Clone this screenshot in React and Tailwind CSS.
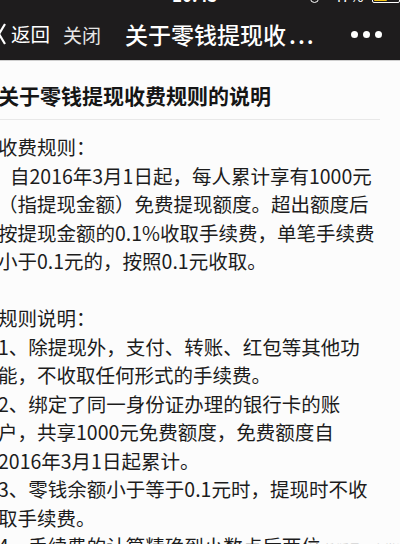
import React from 'react';

const ruleLines = [
  { text: '收费规则：' },
  { text: '自2016年3月1日起，每人累计享有1000元', indent: true },
  { text: '（指提现金额）免费提现额度。超出额度后' },
  { text: '按提现金额的0.1%收取手续费，单笔手续费' },
  { text: '小于0.1元的，按照0.1元收取。' },
  { text: '' },
  { text: '规则说明：' },
  { text: '1、除提现外，支付、转账、红包等其他功' },
  { text: '能，不收取任何形式的手续费。' },
  { text: '2、绑定了同一身份证办理的银行卡的账' },
  { text: '户，共享1000元免费额度，免费额度自' },
  { text: '2016年3月1日起累计。' },
  { text: '3、零钱余额小于等于0.1元时，提现时不收' },
  { text: '取手续费。' },
];

function StatusStrip() {
  // only the bottom edge of the status bar is left in the shot
  return (
    <div className="h-[8px] overflow-hidden">
      <div className="flex items-end h-[16px] -mt-[13px] text-white text-[17px] leading-none">
        <span className="ml-[172px] font-semibold">10:45</span>
        <span className="ml-[92px] w-[10px] h-[10px] rounded-full border border-white" />
        <span className="ml-[14px] text-[15px]">47%</span>
        <span className="ml-[8px] w-[30px] h-[13px] rounded-[2px] border border-white p-[1px] flex">
          <span className="w-[13px] h-full bg-[#f5c518] rounded-[1px]" />
        </span>
      </div>
    </div>
  );
}

function NavBar() {
  return (
    <div className="bg-[#1e1c1d] border-b border-[#cfcfcf] h-[61px]">
      <StatusStrip />
      <div className="flex items-center h-[52px] text-white">
        <svg width="8" height="22" viewBox="0 0 8 22" className="-ml-[2px] shrink-0">
          <polyline points="7,1 1,11 7,21" fill="none" stroke="white" strokeWidth="2.2" />
        </svg>
        <span className="ml-[5px] text-[19.5px] leading-none">返回</span>
        <span className="ml-[13px] text-[19px] leading-none text-[#e6e6e6]">关闭</span>
        <span className="ml-[24px] text-[23px] leading-none font-medium">
          关于零钱提现收<span className="tracking-[2px] ml-[3px]">...</span>
        </span>
        <div className="ml-auto mr-[18px] flex gap-[5px]">
          <span className="w-[7px] h-[7px] rounded-full bg-white" />
          <span className="w-[7px] h-[7px] rounded-full bg-white" />
          <span className="w-[7px] h-[7px] rounded-full bg-white" />
        </div>
      </div>
    </div>
  );
}

export default function App() {
  return (
    <div className="w-[400px] h-[544px] overflow-hidden bg-[#fcfcfc] font-['Noto_Sans_CJK_SC',sans-serif]">
      <NavBar />

      <div className="-ml-[2px] mr-[20px]">
        <h1 className="pt-[19px] pb-[9px] text-[21px] leading-[30px] font-semibold text-[#151515] border-b border-[#e8e8e8]">
          关于零钱提现收费规则的说明
        </h1>

        <div className="pt-[13px] text-[19.5px] leading-[28.5px] text-[#1c1c1c]">
          {ruleLines.map((line, idx) => (
            <div
              key={idx}
              className={line.indent ? 'pl-[12px] h-[28.5px] whitespace-nowrap' : 'h-[28.5px] whitespace-nowrap'}
            >
              {line.text}
            </div>
          ))}
          <div className="h-[28.5px] whitespace-nowrap flex items-baseline">
            <span>4、手续费的计算精确到小数点后两位</span>
            <span className="ml-[4px] text-[12px] text-[#d4d4d4]">搜狐号@小常识</span>
          </div>
        </div>
      </div>
    </div>
  );
}
